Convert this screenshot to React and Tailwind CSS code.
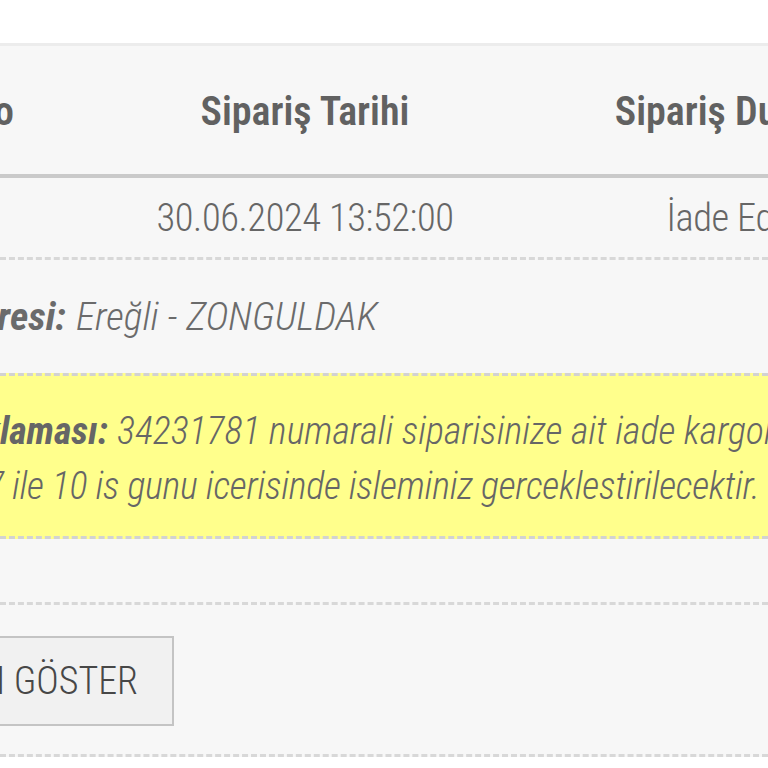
import React from "react";

// order detail card, seen zoomed in: both edges of the table run off the screen
const font = "font-['Roboto_Condensed',Roboto,'DejaVu_Sans_Condensed',sans-serif] font-stretch-[75%]";

function Label({ width, children }) {
  // right edge is fixed, anything longer spills out to the left
  return (
    <div className={`flex shrink-0 justify-end ${width}`}>
      <span className="whitespace-nowrap font-bold">{children}</span>
    </div>
  );
}

export default function App() {
  return (
    <div className={`w-[768px] h-[768px] overflow-hidden bg-white ${font}`}>
      <div className="h-[43px] bg-white" />

      <div className="bg-[#f7f7f7] border-t-[3px] border-[#ececec]">
        {/* table head */}
        <div className="flex h-[132px] items-center pt-[4px] ml-[-300px] border-b-4 border-[#cacaca] text-[40px] font-semibold text-[#616161] whitespace-nowrap">
          <div className="w-[314px] shrink-0 text-right">Sipariş No</div>
          <div className="w-[582px] shrink-0 text-center">Sipariş Tarihi</div>
          <div className="w-[282px] shrink-0 text-center">Sipariş Durumu</div>
        </div>

        {/* table row */}
        <div className="flex h-[79px] items-center ml-[-300px] text-[38.5px] tracking-[-0.4px] font-light text-[#666] whitespace-nowrap">
          <div className="w-[314px] shrink-0 text-right pr-[120px]">34231781</div>
          <div className="w-[582px] shrink-0 text-center">30.06.2024 13:52:00</div>
          <div className="w-[290px] shrink-0 text-center">İade Edildi</div>
        </div>

        {/* address */}
        <div className="flex h-[116px] items-center border-t-[3px] border-dashed border-[#d8d8d8] text-[39.5px] font-light italic text-[#6b6b6b] whitespace-nowrap">
          <Label width="w-[66px]">Teslimat Adresi:</Label>
          <span className="ml-[10px]">Ereğli - ZONGULDAK</span>
        </div>

        {/* return note */}
        <div className="bg-[#ffff8c] border-y-[3px] border-dashed border-[#d2d2d2] pt-[28px] pb-[22px] text-[38px] leading-[55px] font-light italic text-[#666] whitespace-nowrap">
          <div className="flex">
            <Label width="w-[108px]">İade Açıklaması:</Label>
            <span className="ml-[9px]">34231781 numarali siparisinize ait iade kargonuz ulasmistir.</span>
          </div>
          <div className="ml-[-14px] tracking-[-0.25px]">7 ile 10 is gunu icerisinde isleminiz gerceklestirilecektir.</div>
        </div>

        <div className="h-[66px] border-b-[3px] border-dashed border-[#d8d8d8]" />

        {/* action */}
        <div className="pt-[31px] pb-[28px] border-b-[3px] border-dashed border-[#d8d8d8]">
          <div className="flex w-[174px] justify-end">
            <button className="h-[90px] shrink-0 whitespace-nowrap border-2 border-[#c4c4c4] bg-[#f1f1f1] pl-[34px] pr-[34px] text-[38px] font-light text-[#474747]">
              DETAYLARI GÖSTER
            </button>
          </div>
        </div>
      </div>
    </div>
  );
}
